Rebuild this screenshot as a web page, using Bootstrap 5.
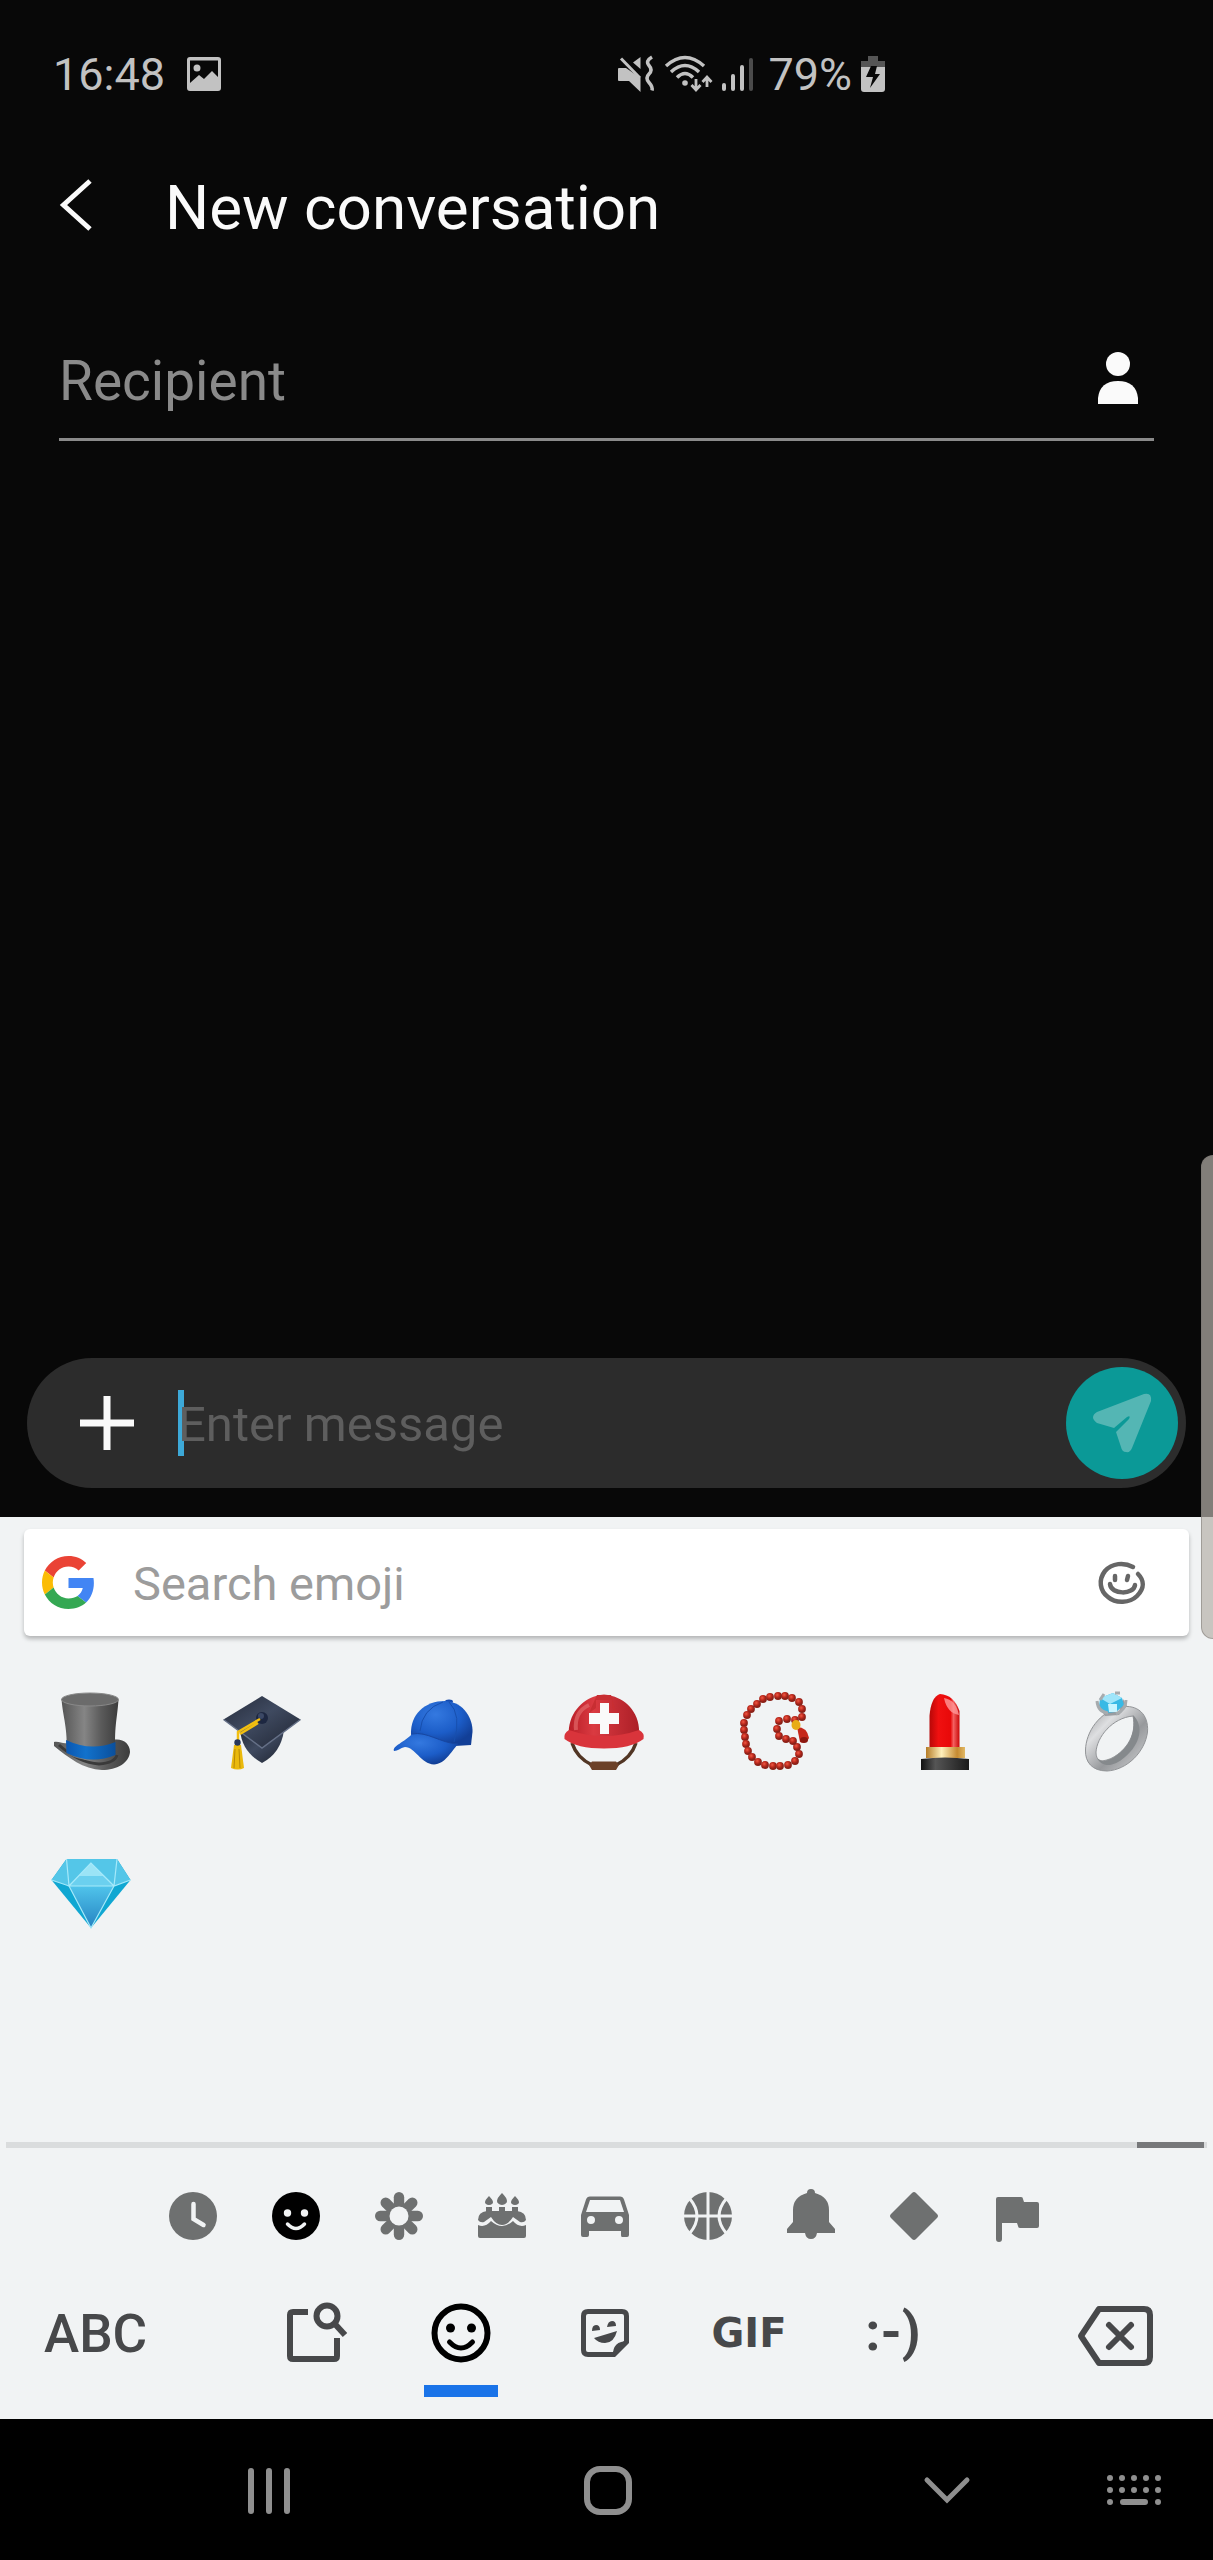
<!DOCTYPE html>
<html lang="en">
<head>
<meta charset="utf-8">
<meta name="viewport" content="width=device-width, initial-scale=1">
<title>New conversation</title>
<link href="https://cdn.jsdelivr.net/npm/bootstrap@5.3.0/dist/css/bootstrap.min.css" rel="stylesheet">
<style>
  body { font-family: Roboto, "Liberation Sans", sans-serif; background: #080808; color: #fafafa; line-height: 1.2; }
  svg { display: block; flex: none; overflow: visible; }
  button { background: none; border: 0; padding: 0; color: inherit; }
  input { background: none; border: 0; outline: 0; padding: 4px 0 0; min-width: 0; color: inherit; }
  .status-bar { padding-top: 44px; color: #c2c2c2; font-size: 45px; }
  .status-bar > div { height: 60px; }
  .status-bar span { padding-top: 2px; }
  .status-left { padding-left: 53px; gap: 22px; }
  .status-right { padding-left: 11px; gap: 9px; }
  .status-right .level { margin-left: 6px; }
  .title-bar { padding: 60px 60px 0; gap: 71px; height: 144px; }
  .title-bar h1 { font-size: 62px; font-weight: 400; line-height: 84px; padding-top: 4px; }
  .recipient { margin: 72px 59px 0; border-bottom: 3px solid #8a8a8a; height: 121px; padding-right: 16px; }
  .recipient input { font-size: 55px; }
  .recipient input::placeholder { color: #8a8a8a; opacity: 1; }
  .composer { margin: 0 27px 29px; height: 130px; background: #2c2c2c; padding: 0 8px 0 53px; }
  .composer input { font-size: 49px; position: relative; }
  .composer input::placeholder { color: #5e5e5e; opacity: 1; }
  .field { margin-left: 44px; }
  .caret { width: 6px; height: 66px; background: #3da9d8; left: 0; top: 50%; margin-top: -33px; }
  .send { width: 112px; height: 112px; background: #0b9997; }
  .keyboard { background: #f1f3f4; color: #47484a; padding-top: 12px; padding-bottom: 22px; }
  .search-box { margin: 0 24px; height: 107px; background: #fff; border-radius: 6px; box-shadow: 0 3px 4px rgba(0,0,0,.25); padding: 0 44px 0 18px; gap: 38px; }
  .search-box input { font-size: 47px; color: #47484a; }
  .search-box input::placeholder { color: #9c9c9c; opacity: 1; }
  .emoji-grid { display: grid; grid-template-columns: repeat(7, 1fr); grid-auto-rows: 161px; min-height: 506px; padding: 15px 10px 0 5px; align-content: start; }
  .track { height: 6px; margin: 0 6px; padding-right: 3px; background: #dadcdd; }
  .thumb { width: 67px; height: 6px; background: #77787a; }
  .categories { height: 134px; padding: 1px 145px 0 142px; color: #6e7070; }
  .categories .current { color: #000; }
  .modes { height: 115px; }
  .mode { height: 115px; }
  .mode span { height: 103px; padding-bottom: 2px; }
  .mode.current { color: #000; }
  .mode.current::after { content: ""; width: 74px; height: 12px; background: #1a73e8; }
  .abc { width: 245px; padding-left: 44px; padding-bottom: 10px; font-size: 53px; font-weight: 500; }
  .gif { font-family: "DejaVu Sans", sans-serif; font-size: 40px; font-weight: 700; }
  .text-face { font-size: 54px; font-weight: 700; }
  .erase { width: 248px; padding-right: 60px; padding-bottom: 8px; }
  .nav-strip { height: 141px; background: #000; color: #8f8f8f; padding: 2px 0 0 100px; }
  .switch-keyboard { width: 116px; margin-left: -19px; padding-left: 10px; }
  .edge-handle { right: 0; top: 1155px; width: 12px; height: 484px; border-radius: 16px 0 0 16px; background: rgba(183,176,170,.7); border: 1px solid rgba(120,116,112,.5); border-right: 0; }
</style>
</head>
<body>
<div class="d-flex flex-column min-vh-100 position-relative overflow-hidden">
  <header>
    <div class="status-bar row g-0">
      <div class="status-left col-6 d-flex align-items-center">
        <span>16:48</span>
        <svg width="34" height="34" fill="currentColor"><path fill-rule="evenodd" d="M3 0h28a3 3 0 0 1 3 3v28a3 3 0 0 1-3 3H3a3 3 0 0 1-3-3V3a3 3 0 0 1 3-3zM3 3.500V26l9-8 5 4 8-8 6 6V3.500zM10 7.500a3.500 3.500 0 1 1 0 7 3.500 3.500 0 0 1 0-7z"/></svg>
      </div>
      <div class="status-right col-6 d-flex align-items-center">
        <svg width="38" height="36" fill="currentColor"><path d="M1 12h7l14.500 10v14L11 25H1a1 1 0 0 1-1-1V13a1 1 0 0 1 1-1zM22.500 1v12L15 6.500z"/><path d="M3 2.500 22 22" stroke="currentColor" stroke-width="3" fill="none"/><path d="M34 1q-7 4-3 8.500t0 8.500 0 8.500 3 8" stroke="currentColor" stroke-width="3.500" fill="none"/></svg>
        <svg width="48" height="36" fill="none" stroke="currentColor" stroke-width="3.500"><path d="M1 10q19-17 38 0M6 16q14-13 28 0M12 21.500q8-8 16 0"/><circle cx="20" cy="27" r="2.800" fill="currentColor" stroke="none"/><path d="M31 23v11m-4.500-5 4.500 5 4.500-5M42 31V21m-4.500 5 4.500-5 4.500 5" stroke-width="2.800"/></svg>
        <svg width="32" height="34" fill="none" stroke="currentColor" stroke-width="4" stroke-linecap="round"><path d="M2 28v4M11 19v13M20 10v22"/><path d="M29 3v29" stroke="#4b4b4b"/></svg>
        <span class="level">79%</span>
        <svg width="25" height="36"><path d="M7 0h10v5h7v7H0V5h7z" fill="#555"/><path d="M0 11h24v22a3 3 0 0 1-3 3H3a3 3 0 0 1-3-3z" fill="currentColor"/><path d="M10 10h6l-2 8h5L9 32l3-11H5z" fill="#080808"/></svg>
      </div>
    </div>
    <div class="title-bar d-flex align-items-center">
      <button type="button" aria-label="Back"><svg width="34" height="52" fill="none" stroke="#fafafa" stroke-width="5"><path d="M30 1 3.500 25 30 49"/></svg></button>
      <h1 class="mb-0">New conversation</h1>
    </div>
  </header>
  <main class="flex-grow-1">
    <div class="recipient d-flex align-items-center">
      <input type="text" class="flex-grow-1" placeholder="Recipient" aria-label="Recipient">
      <button type="button" aria-label="Contacts"><svg width="40" height="54" fill="#fafafa"><circle cx="20" cy="12" r="12"/><path d="M0 52V46Q2 29 20 29T40 46V52Z"/></svg></button>
    </div>
  </main>
  <form class="composer d-flex align-items-center rounded-pill" onsubmit="return false">
    <button type="button" aria-label="Attach"><svg width="54" height="54" stroke="#fafafa" stroke-width="7"><path d="M0 27h54M27 0v54"/></svg></button>
    <div class="field position-relative flex-grow-1 d-flex align-items-center">
      <span class="caret position-absolute"></span>
      <input type="text" class="w-100" placeholder="Enter message" aria-label="Enter message">
    </div>
    <button type="submit" class="send rounded-circle d-flex align-items-center justify-content-center" aria-label="Send"><svg width="58" height="60" fill="#54b6b4"><path d="M51 1Q59-1 58 8L39 55Q37 60 33 59 29 59 28 54L23 39 36 26Q38 22 34 24L21 35 4 30Q-4 24 4 19Z"/></svg></button>
  </form>
  <section class="keyboard">
    <div class="search-box d-flex align-items-center">
      <svg width="53" height="53" viewBox="0 0 48 48"><path fill="#ea4335" d="M24 9.500c3.540 0 6.710 1.220 9.210 3.600l6.850-6.850C35.900 2.380 30.470 0 24 0 14.620 0 6.510 5.380 2.560 13.220l7.980 6.190C12.430 13.720 17.740 9.500 24 9.500z"/><path fill="#4285f4" d="M46.980 24.550c0-1.570-.15-3.090-.38-4.550H24v9.020h12.940c-.58 2.960-2.260 5.480-4.780 7.180l7.730 6c4.510-4.180 7.090-10.360 7.090-17.650z"/><path fill="#fbbc05" d="M10.530 28.590c-.48-1.450-.76-2.990-.76-4.590s.27-3.140.76-4.590l-7.980-6.190C.92 16.460 0 20.120 0 24s.92 7.540 2.560 10.780z"/><path fill="#34a853" d="M24 48c6.480 0 11.930-2.130 15.890-5.810l-7.730-6c-2.150 1.450-4.920 2.300-8.160 2.300-6.260 0-11.570-4.220-13.470-9.910l-7.980 6.190C6.510 42.620 14.620 48 24 48z"/></svg>
      <input type="search" class="flex-grow-1" placeholder="Search emoji" aria-label="Search emoji">
      <button type="button" aria-label="Draw emoji"><svg width="46" height="42" fill="none" stroke="#666" stroke-width="4.500" stroke-linecap="round"><path d="M34 5C25 0 13 1 6 9-1 18 1 29 9 35c8 7 22 6 29-1 8-8 7-16 1-22"/><path d="M11 22c1 11 24 11 25 1M16 14v4M29 14l-1 4"/></svg></button>
    </div>

    <div class="emoji-grid">
      <button type="button" class="d-flex align-items-center justify-content-center" aria-label="Top hat">
        <svg width="80" height="80"><defs><linearGradient id="felt"><stop offset="0" stop-color="#555"/><stop offset=".4" stop-color="#858585"/><stop offset=".7" stop-color="#5a5a5a"/><stop offset="1" stop-color="#3c3c3c"/></linearGradient><linearGradient id="ribbon"><stop offset="0" stop-color="#0a56b0"/><stop offset=".4" stop-color="#1272cc"/><stop offset="1" stop-color="#0a4f9c"/></linearGradient></defs><path d="M3 50C8 49 12 52 16 51L62 48C72 46 79 52 79 60 78 71 66 78 51 78 32 77 18 66 3 54Z" fill="url(#felt)"/><path d="M8 53Q28 71 48 72 64 71 66 63" fill="none" stroke="#3a3a3a" stroke-width="3"/><path d="M10.500 7C12 26 17 36 15.500 62Q40 74 64.500 62C63 36 66 28 67.500 8Z" fill="url(#felt)"/><path d="M15 48Q40 60 64.500 50V63Q40 73 15.500 61Z" fill="url(#ribbon)"/><ellipse cx="39" cy="7.500" rx="28.500" ry="6.500" fill="#6b6b6b" stroke="#898989"/></svg>
      </button>
      <button type="button" class="d-flex align-items-center justify-content-center" aria-label="Graduation cap">
        <svg width="80" height="80"><defs><linearGradient id="board" x1="0" y1="0" x2="1" y2="1"><stop offset="0" stop-color="#242a39"/><stop offset=".45" stop-color="#3f4a60"/><stop offset="1" stop-color="#1f2431"/></linearGradient></defs><path d="M18 38Q20 60 40 71 59 61 62 38Z" fill="url(#board)"/><path d="M1.500 27.500 40 4 78.500 27.500 40 56Z" fill="url(#board)"/><path d="M1.500 27.500 40 56 78.500 27.500" fill="none" stroke="#657087" stroke-width="1.500"/><circle cx="40" cy="26" r="6" fill="#1d2741"/><circle cx="39" cy="24" r="3" fill="#3b4865"/><path d="M38 27 16 40v12M36 31 18 42" fill="none" stroke="#f3bf10" stroke-width="2.500"/><path d="M12 53h7l3 23q-6 3-13 0z" fill="#eab90c"/><path d="M13 57 12 76M17 57l1 19" stroke="#b88905"/><circle cx="15.500" cy="50.500" r="3.200" fill="#26365a"/></svg>
      </button>
      <button type="button" class="d-flex align-items-center justify-content-center" aria-label="Billed cap">
        <svg width="80" height="80"><defs><radialGradient id="crown" cx=".4" cy=".3" r=".7"><stop offset="0" stop-color="#3479e0"/><stop offset=".6" stop-color="#1c5dc8"/><stop offset="1" stop-color="#123f97"/></radialGradient></defs><ellipse cx="56" cy="9.500" rx="4" ry="2" fill="#164bae"/><path d="M18 43C17 22 32 9 52 9 72 10 80 28 79.500 40L78 53 62 54Z" fill="url(#crown)"/><path d="M27 39Q29 17 50 10M61 50Q69 23 56 10" fill="none" stroke="#174fae"/><path d="M19 42C34 39 47 51 65 52 58 60 52 72 41 72.500 28 72 22 55 12 55 7 56 5 59 1 59-1 54 12 50 19 42Z" fill="url(#crown)"/><path d="M19 42C34 39 47 51 65 52" fill="none" stroke="#1746a0"/></svg>
      </button>
      <button type="button" class="d-flex align-items-center justify-content-center" aria-label="Rescue helmet">
        <svg width="80" height="80"><defs><linearGradient id="shell"><stop offset="0" stop-color="#b91f28"/><stop offset=".35" stop-color="#da3a41"/><stop offset="1" stop-color="#ac1f27"/></linearGradient></defs><path d="M8 51Q13 66 28 73M72 51Q67 66 52 73" fill="none" stroke="#513524" stroke-width="3.500"/><path d="M28 69.500H52L55 73 52 78H28L25 73Z" fill="#6c4128"/><path d="M5 44C3 22 19 7 32 4Q40 1 48 4C63 8 77 22 75 44Z" fill="url(#shell)"/><path d="M33 3h14l5 17-4-5V8H32v8l-7 5z" fill="#c82e32"/><path d="M12 38Q10 20 25 13" fill="none" stroke="#e67172" stroke-width="4" opacity=".6"/><path d="M5 38Q22 44 40 44T75 38Q81 41 79.500 47 67 56.500 40 56.500T.5 47Q-.5 41 5 38Z" fill="#d9343b"/><path d="M36 11h9v10h10v11H45v10h-9V32H25V21h11z" fill="#fafafa"/></svg>
      </button>
      <button type="button" class="d-flex align-items-center justify-content-center" aria-label="Prayer beads">
        <svg width="80" height="80"><defs><radialGradient id="beadfill" cx=".4" cy=".35"><stop offset="0" stop-color="#f05a45"/><stop offset=".6" stop-color="#bd291d"/><stop offset="1" stop-color="#8c2118"/></radialGradient><circle id="bead" r="3.900" fill="url(#beadfill)"/></defs><use href="#bead" x="67" y="25"/><use href="#bead" x="67" y="17"/><use href="#bead" x="64" y="10"/><use href="#bead" x="57" y="6"/><use href="#bead" x="50" y="4"/><use href="#bead" x="43" y="4"/><use href="#bead" x="35" y="5"/><use href="#bead" x="28" y="7"/><use href="#bead" x="22" y="12"/><use href="#bead" x="16" y="17"/><use href="#bead" x="12" y="23"/><use href="#bead" x="9" y="31"/><use href="#bead" x="9" y="38"/><use href="#bead" x="10" y="45"/><use href="#bead" x="11" y="52"/><use href="#bead" x="13" y="59"/><use href="#bead" x="17" y="65"/><use href="#bead" x="23" y="70"/><use href="#bead" x="30" y="73"/><use href="#bead" x="38" y="74"/><use href="#bead" x="45" y="74"/><use href="#bead" x="53" y="73"/><use href="#bead" x="60" y="69"/><use href="#bead" x="64" y="62"/><use href="#bead" x="62" y="55"/><use href="#bead" x="58" y="49"/><use href="#bead" x="51" y="47"/><use href="#bead" x="44" y="44"/><use href="#bead" x="42" y="37"/><use href="#bead" x="44" y="29"/><use href="#bead" x="52" y="27"/><use href="#bead" x="60" y="28"/><path d="M62 35Q72 35 74 46 71 52 65 50Z" fill="#c5271a"/><ellipse cx="69" cy="48" rx="4" ry="3" fill="#8c170f"/><ellipse cx="61" cy="33" rx="4.500" ry="5" fill="#e8ac16"/></svg>
      </button>
      <button type="button" class="d-flex align-items-center justify-content-center" aria-label="Lipstick">
        <svg width="80" height="80"><defs><linearGradient id="stick"><stop offset="0" stop-color="#b80808"/><stop offset=".3" stop-color="#f01010"/><stop offset=".7" stop-color="#e80909"/><stop offset=".8" stop-color="#f46060"/><stop offset="1" stop-color="#c90707"/></linearGradient><linearGradient id="gold"><stop offset="0" stop-color="#b57c27"/><stop offset=".4" stop-color="#fff0bb"/><stop offset=".8" stop-color="#c58a31"/><stop offset="1" stop-color="#e2b965"/></linearGradient><linearGradient id="base"><stop offset="0" stop-color="#111"/><stop offset=".3" stop-color="#555"/><stop offset="1" stop-color="#1a1a1a"/></linearGradient></defs><path d="M23.500 55V24Q25 5 34 2 48 3 53.500 19V55Z" fill="url(#stick)"/><path d="M38 6Q50 8 53 23 41 21 38 6Z" fill="#f99" opacity=".8"/><path d="M20 55h39v11H20z" fill="url(#gold)"/><path d="M15 67q24-3 48 0v11H15z" fill="url(#base)"/></svg>
      </button>
      <button type="button" class="d-flex align-items-center justify-content-center" aria-label="Ring">
        <svg width="80" height="80"><defs><linearGradient id="silver" x1="0" y1="0" x2="1" y2="1"><stop offset="0" stop-color="#8d8f92"/><stop offset=".3" stop-color="#dedfe1"/><stop offset=".6" stop-color="#97999c"/><stop offset="1" stop-color="#d5d6d8"/></linearGradient></defs><path fill-rule="evenodd" fill="url(#silver)" stroke="#929497" d="M8.500 58C9 40 22 20 44 15 60 12 72 22 70.500 40 68 60 50 78 30 79 15 79 8 70 8.500 58ZM19 60C19 72 28 69 35 66 50 58 60 42 56 24 35 26 20 45 19 60Z"/><path d="M56 23C67 33 64 52 48 65 37 75 25 76 20 66 26 72 31 68 36 66 52 56 59 42 56 23Z" fill="#85898c"/><path d="M19 10 28 24 42 23 50 14 46 7 42 20 32 20Z" fill="#9a9da1"/><path d="M23 6 36 1 45 6 47 13 39 20 29 21 22 15Z" fill="#39b9e5"/><path d="M23 6 36 1 45 6 33 12Z" fill="#9fe5fa"/><path d="M31 12h9v8h-8z" fill="#c9f4ff"/><path d="M20 9Q21 20 31 21M49 8Q49 18 39 22M38 1h5M27 2l-4 6" fill="none" stroke="#a7abae" stroke-width="3"/></svg>
      </button>
      <button type="button" class="d-flex align-items-center justify-content-center" aria-label="Gem stone">
        <svg width="80" height="80"><defs><linearGradient id="facet" x1="0" y1="0" x2="0" y2="1"><stop offset="0" stop-color="#50c4eb"/><stop offset="1" stop-color="#2583c2"/></linearGradient></defs><path d="M15.500 6H66L79.500 27 40 75 .5 27Z" fill="#10a7d2"/><path d="M15.500 6H66L79.500 27 63 33H18L.5 27Z" fill="#54c6e8"/><path d="M40 10 18 33H63Z" fill="#9be4f6"/><path d="M28 23H52L63 33H18Z" fill="#6bd0ef"/><path d="M18 33H63L40 75Z" fill="url(#facet)"/><path d="M15.500 6 18 33 .5 27M66 6 63 33 79.500 27M40 10 18 33H63ZM18 33 40 75 63 33" fill="none" stroke="#a5e9fa" stroke-width="1.200"/></svg>
      </button>
    </div>

    <div class="track d-flex justify-content-end"><div class="thumb"></div></div>

    <div class="categories d-flex">
      <button type="button" class="col d-flex align-items-center justify-content-center" aria-label="Recent"><svg width="48" height="48"><circle cx="24" cy="24" r="24" fill="currentColor"/><path d="M24.500 12v15l10 6" fill="none" stroke="#f1f3f4" stroke-width="4.500" stroke-linecap="round"/></svg></button>
      <button type="button" class="current col d-flex align-items-center justify-content-center" aria-label="Smileys"><svg width="48" height="48"><circle cx="24" cy="24" r="24" fill="currentColor"/><circle cx="15.500" cy="21" r="3.700" fill="#f1f3f4"/><circle cx="32.500" cy="21" r="3.700" fill="#f1f3f4"/><path d="M15.500 32q8.500 9 17 0" fill="none" stroke="#f1f3f4" stroke-width="3.500" stroke-linecap="round"/></svg></button>
      <button type="button" class="col d-flex align-items-center justify-content-center" aria-label="Nature"><svg width="48" height="48" fill="currentColor"><defs><rect id="petal" x="18.800" width="10.400" height="17" rx="5.200"/></defs><use href="#petal"/><use href="#petal" transform="rotate(45 24 24)"/><use href="#petal" transform="rotate(90 24 24)"/><use href="#petal" transform="rotate(135 24 24)"/><use href="#petal" transform="rotate(180 24 24)"/><use href="#petal" transform="rotate(225 24 24)"/><use href="#petal" transform="rotate(270 24 24)"/><use href="#petal" transform="rotate(315 24 24)"/><circle cx="24" cy="24" r="9.500" fill="#f1f3f4"/></svg></button>
      <button type="button" class="col d-flex align-items-center justify-content-center" aria-label="Food"><svg width="48" height="48" fill="currentColor"><path d="M11 4q8 8 0 9-8-1 0-9zM24 1q10 10 0 12-10-2 0-12zM37 4q8 8 0 9-8-1 0-9zM8 15h6v6H8zM21 15h6v6h-6zM34 15h6v6h-6z"/><path d="M9 19H39Q48 20 48 28 46 31 42 30L35 25q-5 8-11 8t-11-8L6 30Q2 31 0 28 0 20 9 19Z"/><path d="M0 33q7 3 13-4 11 10 22 0 6 7 13 4v11a2 2 0 0 1-2 2H2a2 2 0 0 1-2-2z"/></svg></button>
      <button type="button" class="col d-flex align-items-center justify-content-center" aria-label="Travel"><svg width="48" height="48" fill="currentColor"><path fill-rule="evenodd" d="M9 4.500h30q3 0 4 3L48 23v20q0 2-2 2h-5q-1 0-1-2v-4H8v4q0 2-2 2H2q-2 0-2-2V23L5 7.500q1-3 4-3zM9 8 5 20h38L39 8zM10 24a4 4 0 1 0 0 8 4 4 0 0 0 0-8zm28 0a4 4 0 1 0 0 8 4 4 0 0 0 0-8z"/></svg></button>
      <button type="button" class="col d-flex align-items-center justify-content-center" aria-label="Activities"><svg width="48" height="48"><circle cx="24" cy="24" r="24" fill="currentColor"/><path d="M24 0v48M0 24h48M6 7Q20 24 6 41M42 7Q28 24 42 41" fill="none" stroke="#f1f3f4" stroke-width="3"/></svg></button>
      <button type="button" class="col d-flex align-items-center justify-content-center" aria-label="Objects"><svg width="48" height="48" fill="currentColor"><path d="M20 1q0-4 4-4t4 4q14 4 14 17v12l6 7v4H30q-1 6-6 6t-6-6H0v-4l6-7V18Q6 5 20 1z"/></svg></button>
      <button type="button" class="col d-flex align-items-center justify-content-center" aria-label="Symbols"><svg width="48" height="48" fill="currentColor"><path d="M22 1q2-2 4 0l21 21q2 2 0 4L26 47q-2 2-4 0L1 26q-2-2 0-4z"/></svg></button>
      <button type="button" class="col d-flex align-items-center justify-content-center" aria-label="Flags"><svg width="48" height="48" fill="currentColor"><path d="M5 5h23q2 0 2 2l1 3h13q2 0 2 2v22q0 2-2 2H27q-2 0-2-2l-1-3H9v16q0 3-3 3t-3-3V7q0-2 2-2z"/></svg></button>
    </div>

    <div class="modes d-flex">
      <button type="button" class="abc text-start">ABC</button>
      <div class="d-flex flex-grow-1">
        <button type="button" class="mode col d-flex flex-column align-items-center" aria-label="Search all"><span class="d-flex align-items-center"><svg width="60" height="60" fill="none" stroke="currentColor" stroke-width="6"><path d="M21 9H6Q3 9 3 12V53Q3 56 6 56H47Q50 56 50 53V35"/><circle cx="40" cy="13" r="10.500"/><path d="m47 20 11 12"/></svg></span></button>
        <button type="button" class="mode current col d-flex flex-column align-items-center" aria-label="Emoji"><span class="d-flex align-items-center"><svg width="60" height="60"><circle cx="30" cy="30" r="26.500" fill="none" stroke="currentColor" stroke-width="6"/><circle cx="19.500" cy="25" r="4.500"/><circle cx="40.500" cy="25" r="4.500"/><path d="M18.500 39q11.500 12 23 0" fill="none" stroke="currentColor" stroke-width="5" stroke-linecap="round"/></svg></span></button>
        <button type="button" class="mode col d-flex flex-column align-items-center" aria-label="Stickers"><span class="d-flex align-items-center"><svg width="48" height="48"><path d="M7 2.500H41Q45.500 2.500 45.500 7V33L33 45.500H7Q2.500 45.500 2.500 41V7Q2.500 2.500 7 2.500Z" fill="none" stroke="currentColor" stroke-width="5"/><path d="M32 47Q31 32 47 32Z M13 29 36 22Q33 34 24 34 17 34 13 29ZM11 22q0-6 4-6t4 5zM26 18q1-6 5-6t4 5z" fill="currentColor"/></svg></span></button>
        <button type="button" class="mode col d-flex flex-column align-items-center"><span class="gif d-flex align-items-center">GIF</span></button>
        <button type="button" class="mode col d-flex flex-column align-items-center"><span class="text-face d-flex align-items-center">:-)</span></button>
      </div>
      <button type="button" class="erase d-flex align-items-center justify-content-end" aria-label="Delete"><svg width="75" height="60" fill="none" stroke="currentColor" stroke-width="6" stroke-linejoin="round"><path d="M21 3H66Q72 3 72 9V51Q72 57 66 57H21L3 30Z"/><path d="m31 19 22 22m0-22L31 41" stroke-linecap="round"/></svg></button>
    </div>
  </section>
  <nav class="nav-strip d-flex" aria-label="System">
    <button type="button" class="col d-flex align-items-center justify-content-center" aria-label="Recents"><svg width="42" height="46" stroke="currentColor" stroke-width="6" stroke-linecap="round"><path d="M3 3v40M21 3v40M39 3v40"/></svg></button>
    <button type="button" class="col d-flex align-items-center justify-content-center" aria-label="Home"><svg width="48" height="49"><rect x="3" y="3" width="42" height="43" rx="13" fill="none" stroke="currentColor" stroke-width="6"/></svg></button>
    <button type="button" class="col d-flex align-items-center justify-content-center" aria-label="Hide keyboard"><svg width="46" height="27" fill="none" stroke="currentColor" stroke-width="5" stroke-linecap="round"><path d="m3 3 20 20L43 3"/></svg></button>
    <button type="button" class="switch-keyboard d-flex align-items-center" aria-label="Switch keyboard"><svg width="56" height="31" stroke="currentColor" stroke-width="6" stroke-linecap="round"><path d="M3 3h0M15 3h0M27 3h0M39 3h0M51 3h0M3 15h0M15 15h0M27 15h0M39 15h0M51 15h0M3 27h0M16 27h22M51 27h0"/></svg></button>
  </nav>
  <div class="edge-handle position-absolute"></div>
</div>
<script src="https://cdn.jsdelivr.net/npm/bootstrap@5.3.0/dist/js/bootstrap.bundle.min.js"></script>
</body>
</html>
